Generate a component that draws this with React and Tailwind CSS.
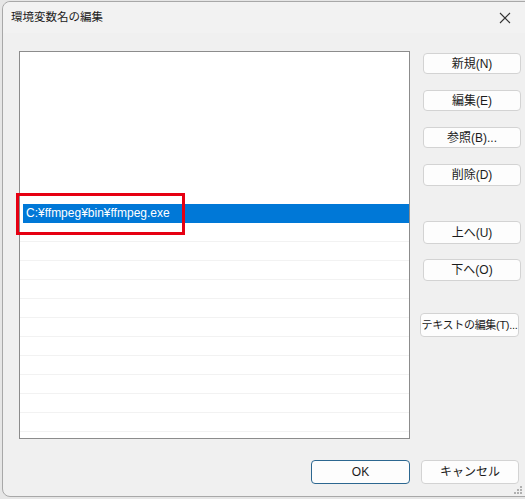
import React from 'react';

const font = { fontFamily: '"Liberation Sans", "Noto Sans CJK JP", sans-serif' };

const Btn = ({ children, className = '', size = 'text-[12px]' }) => (
  <button
    className={`h-[21px] w-[98px] rounded-[4px] border border-[#d3d3d3] bg-[#fdfdfd] ${size} leading-none text-[#1b1b1b] whitespace-nowrap ${className}`}
  >
    {children}
  </button>
);

const App = () => {
  const rows = Array.from({ length: 21 }, (_, i) => i);

  return (
    <div className="w-[525px] h-[499px] bg-[#e6e6e6] overflow-hidden pl-[2px] pt-[1px]" style={font}>
      <div className="relative w-[530px] h-[496px] bg-[#f0f0f0] rounded-l-[8px] border border-[#a8a8a8] flex flex-col">
        {/* タイトルバー */}
        <div className="h-[31px] flex items-center justify-between pl-[8px] pr-[18px] bg-[#f2f2f2] rounded-tl-[8px]">
          <span className="text-[11.5px] text-[#1a1a1a]">環境変数名の編集</span>
          <svg width="12" height="12" viewBox="0 0 12 12" className="mr-[2px]">
            <path d="M1 1 L11 11 M11 1 L1 11" stroke="#333" strokeWidth="1.1" />
          </svg>
        </div>

        <div className="flex pl-[16px] pt-[18px]">
          {/* リスト */}
          <div className="w-[391px] h-[388px] border border-[#8c8c8c] bg-white overflow-hidden">
            {rows.map((i) => (
              <div
                key={i}
                className={`h-[19px] shrink-0 ${i > 8 ? 'border-b border-[#f2f2f2]' : ''}`}
              >
                {i === 8 && (
                  <div className="ml-[3px] h-[19px] bg-[#0078d7] text-white text-[12px] leading-[19px] pl-[3px]">
                    C:¥ffmpeg¥bin¥ffmpeg.exe
                  </div>
                )}
              </div>
            ))}
          </div>

          {/* ボタン列 */}
          <div className="ml-[13px] pt-[2px] flex flex-col">
            <Btn>新規(N)</Btn>
            <Btn className="mt-[16px]">編集(E)</Btn>
            <Btn className="mt-[16px]">参照(B)...</Btn>
            <Btn className="mt-[16px] h-[22px]">削除(D)</Btn>
            <Btn className="mt-[35px] h-[23px]">上へ(U)</Btn>
            <Btn className="mt-[15px] h-[22px]">下へ(O)</Btn>
            <Btn className="mt-[32px] -ml-[3px] h-[24px] w-[99px] tracking-[-0.3px]" size="text-[11px]">
              テキストの編集(T)...
            </Btn>
          </div>
        </div>

        {/* OK / キャンセル */}
        <div className="flex pl-[308px] pt-[21px] gap-[11px]">
          <button className="h-[24px] w-[99px] rounded-[4px] border border-[#2c6790] bg-[#fdfdfd] text-[12px] text-[#1b1b1b]">
            OK
          </button>
          <button className="h-[24px] w-[98px] rounded-[4px] border border-[#d3d3d3] bg-[#fdfdfd] text-[12px] text-[#1b1b1b]">
            キャンセル
          </button>
        </div>

        {/* サイズグリップ */}
        <div className="absolute left-[511px] top-[484px] grid grid-cols-3 gap-[1px]">
          {[0, 0, 1, 0, 1, 1, 1, 1, 1].map((v, i) => (
            <span key={i} className={`w-[2px] h-[2px] ${v ? 'bg-[#b0b0b0]' : ''}`} />
          ))}
        </div>

        {/* 赤枠 */}
        <div className="absolute left-[13px] top-[191px] w-[169px] h-[42px] border-[3px] border-[#e60012]" />
      </div>
    </div>
  );
};

export default App;
